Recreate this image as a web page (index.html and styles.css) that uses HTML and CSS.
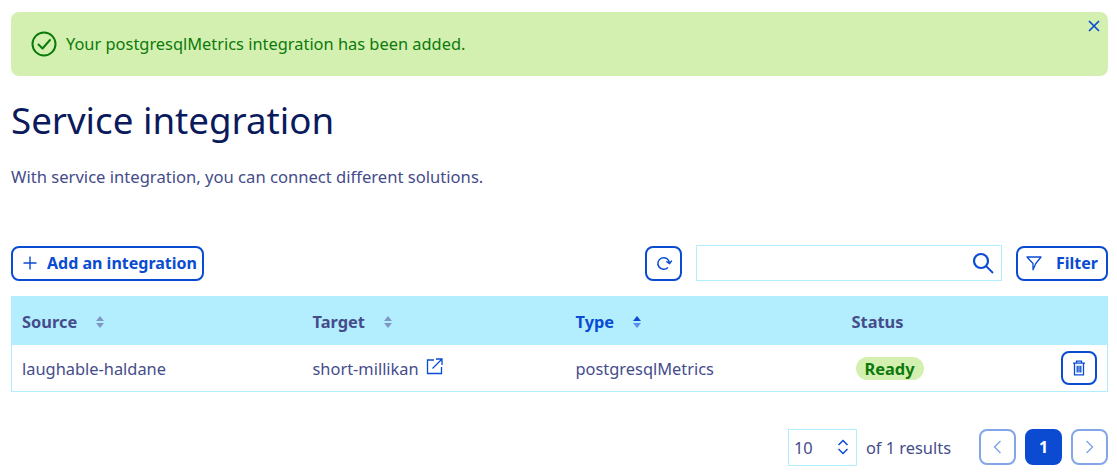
FILE: index.html
```html
<!DOCTYPE html>
<html lang="en">
<head>
  <meta charset="UTF-8">
  <title>Service integration</title>
  <link rel="stylesheet" href="styles.css">
</head>
<body>
  <div class="alert">
    <svg class="alert-icon" width="26" height="26" viewBox="0 0 26 26" fill="none" stroke="#0b7a0b" stroke-width="2"><circle cx="13" cy="13" r="11.5"/><path d="M7.5 13.5l4 4 7.5-8.5" stroke-linecap="round" stroke-linejoin="round"/></svg>
    <span class="alert-text">Your postgresqlMetrics integration has been added.</span>
    <button class="alert-close" aria-label="Close">
      <svg width="12" height="12" viewBox="0 0 12 12" fill="none" stroke="#0a4bd2" stroke-width="1.7"><path d="M1 1l10 10M11 1L1 11"/></svg>
    </button>
  </div>

  <h1>Service integration</h1>
  <p class="intro">With service integration, you can connect different solutions.</p>

  <div class="toolbar">
    <button class="btn btn-add">
      <svg width="16" height="16" viewBox="0 0 16 16" fill="none" stroke="#0a4bd2" stroke-width="1.4"><path d="M8 1.5v13M1.5 8h13"/></svg>
      Add an integration
    </button>
    <button class="btn btn-icon" aria-label="Refresh">
      <svg width="18" height="18" viewBox="0 0 18 18" fill="none" stroke="#0a4bd2" stroke-width="1.5"><path d="M14.4 8.5a5.8 5.8 0 1 0-1.5 5"/><path d="M11.4 7.4l3.2 2.2 2.2-3" stroke-linejoin="round"/></svg>
    </button>
    <div class="search">
      <svg width="22" height="22" viewBox="0 0 22 22" fill="none" stroke="#0a4bd2" stroke-width="2.2"><circle cx="9" cy="9" r="7"/><path d="M14 14l7 7" stroke-width="1.8"/></svg>
    </div>
    <button class="btn btn-filter">
      <svg width="16" height="16" viewBox="0 0 16 16" fill="none" stroke="#0a4bd2" stroke-width="1.3"><path d="M1 2h14L9.8 8.5 7 14.8V8.5z" stroke-linejoin="round"/></svg>
      Filter
    </button>
  </div>

  <table>
    <thead>
      <tr>
        <th class="col-source"><span class="th-inner">Source <span class="sort"><i class="up"></i><i class="down"></i></span></span></th>
        <th class="col-target"><span class="th-inner">Target <span class="sort"><i class="up"></i><i class="down"></i></span></span></th>
        <th class="col-type active"><span class="th-inner">Type <span class="sort"><i class="up"></i><i class="down"></i></span></span></th>
        <th>Status</th>
        <th class="col-action"></th>
      </tr>
    </thead>
    <tbody>
      <tr>
        <td>laughable-haldane</td>
        <td>short-millikan
          <svg class="ext" width="17" height="17" viewBox="0 0 17 17" fill="none" stroke="#0a4bd2" stroke-width="1.3"><path d="M8 2H1.5v13.5h14V9"/><path d="M6.5 10.5L15.5 1.5M10 1h6v6"/></svg>
        </td>
        <td>postgresqlMetrics</td>
        <td><span class="badge">Ready</span></td>
        <td class="col-action">
          <button class="btn btn-trash" aria-label="Delete">
            <svg width="14" height="16" viewBox="0 0 14 16" fill="none" stroke="#0a4bd2" stroke-width="1.3"><path d="M1 3.2h12M4.5 3V1.2h5V3M2.5 3.2v11.6h9V3.2M5.2 5.8v6.6M7 5.8v6.6M8.8 5.8v6.6"/></svg>
          </button>
        </td>
      </tr>
    </tbody>
  </table>

  <div class="pagination">
    <div class="page-size">
      <span>10</span>
      <svg width="12" height="16" viewBox="0 0 12 16" fill="none" stroke="#0a4bd2" stroke-width="1.5"><path d="M1.5 6L6 1.5 10.5 6M1.5 10L6 14.5 10.5 10"/></svg>
    </div>
    <span class="results">of 1 results</span>
    <button class="page-btn" aria-label="Previous">
      <svg width="9" height="14" viewBox="0 0 9 14" fill="none" stroke="#7fa3e8" stroke-width="1.4"><path d="M7.5 1L1.5 7l6 6"/></svg>
    </button>
    <button class="page-btn current">1</button>
    <button class="page-btn" aria-label="Next">
      <svg width="9" height="14" viewBox="0 0 9 14" fill="none" stroke="#7fa3e8" stroke-width="1.4"><path d="M1.5 1l6 6-6 6"/></svg>
    </button>
  </div>
</body>
</html>
```

FILE: styles.css
```css
* {
  box-sizing: border-box;
}
body {
  font-family: 'Noto Sans', sans-serif;
  font-size: 16.4px;
  margin: 0;
  padding: 12px 9px 0 11px;
  background: #ffffff;
  color: #454c8b;
  overflow: hidden;
}
button {
  font-family: inherit;
  cursor: pointer;
}
.alert {
  display: flex;
  align-items: center;
  gap: 9px;
  height: 64px;
  padding: 0 20px;
  background: #d4f0b0;
  border-radius: 8px;
  color: #0b7a0b;
  position: relative;
}
.alert-text {
  padding-bottom: 2px;
}
.alert-close {
  position: absolute;
  top: 8px;
  right: 8px;
  padding: 0;
  border: none;
  background: none;
  line-height: 0;
}
h1 {
  margin: 17px 0 0;
  font-size: 36.7px;
  line-height: 54px;
  font-weight: 400;
  color: #0a1a5c;
}
.intro {
  margin: 18px 0 0;
  font-size: 16.6px;
  line-height: 24px;
}
.toolbar {
  display: flex;
  align-items: center;
  margin-top: 56px;
  height: 36px;
}
.btn {
  display: flex;
  align-items: center;
  background: #ffffff;
  border: 2px solid #0a4bd2;
  border-radius: 8px;
  color: #0a4bd2;
  font-weight: 700;
  font-size: 16px;
  height: 35px;
  padding: 0;
}
.btn-add {
  width: 193px;
  padding-left: 9px;
  gap: 9px;
  margin-right: auto;
}
.btn-icon {
  width: 37px;
  justify-content: center;
}
.search {
  display: flex;
  align-items: center;
  justify-content: flex-end;
  width: 306px;
  height: 36px;
  margin: 0 14px;
  padding-right: 7px;
  border: 1px solid #b3eeff;
}
.btn-filter {
  width: 92px;
  padding-left: 8px;
  gap: 14px;
}
table {
  width: 100%;
  margin-top: 15px;
  table-layout: fixed;
  border-collapse: collapse;
  border: 1px solid #b3eeff;
  border-top: none;
}
th {
  height: 49px;
  padding: 2px 0 0 10px;
  background: #b3eeff;
  text-align: left;
  font-size: 16.4px;
  font-weight: 700;
}
td {
  height: 46px;
  padding: 2px 0 0 10px;
}
.col-source {
  width: 290px;
}
.col-target {
  width: 264px;
}
.col-type {
  width: 275px;
}
th.col-action, td.col-action {
  width: 60px;
  padding: 0 10px 0 0;
}
th.active {
  color: #0a4bd2;
}
th:nth-child(2), td:nth-child(2), th:nth-child(4), td:nth-child(4) {
  padding-left: 11px;
}
.th-inner {
  display: inline-flex;
  align-items: center;
  gap: 19px;
}
.sort {
  display: flex;
  flex-direction: column;
  gap: 2px;
}
.sort i {
  display: block;
  width: 0;
  height: 0;
  border-left: 4.5px solid transparent;
  border-right: 4.5px solid transparent;
}
.sort .up {
  border-bottom: 5.5px solid #8097c4;
}
.sort .down {
  border-top: 5.5px solid #8097c4;
}
.active .sort .up {
  border-bottom-color: #0a4bd2;
}
.active .sort .down {
  border-top-color: #5c8df0;
}
.ext {
  vertical-align: 0;
  margin-left: 3px;
}
.badge {
  display: inline-block;
  padding: 0 9px;
  margin-left: 4px;
  line-height: 23px;
  border-radius: 12px;
  background: #d4f0b0;
  color: #0b7a0b;
  font-weight: 700;
}
.btn-trash {
  width: 36px;
  height: 34px;
  justify-content: center;
  margin-left: auto;
}
.pagination {
  display: flex;
  align-items: center;
  justify-content: flex-end;
  margin-top: 37px;
}
.page-size {
  display: flex;
  align-items: center;
  justify-content: space-between;
  width: 69px;
  height: 37px;
  padding: 0 7px 0 5px;
  border: 1px solid #b3eeff;
}
.results {
  margin: 0 28px 0 9px;
}
.page-btn {
  display: flex;
  align-items: center;
  justify-content: center;
  width: 37px;
  height: 36px;
  margin-left: 9px;
  padding: 0;
  background: #ffffff;
  border: 2px solid #84a5e8;
  border-radius: 8px;
}
.results + .page-btn {
  margin-left: 0;
}
.current {
  background: #0a4bd2;
  border-color: #0a4bd2;
  color: #ffffff;
  font-weight: 700;
  font-size: 16px;
}
```
